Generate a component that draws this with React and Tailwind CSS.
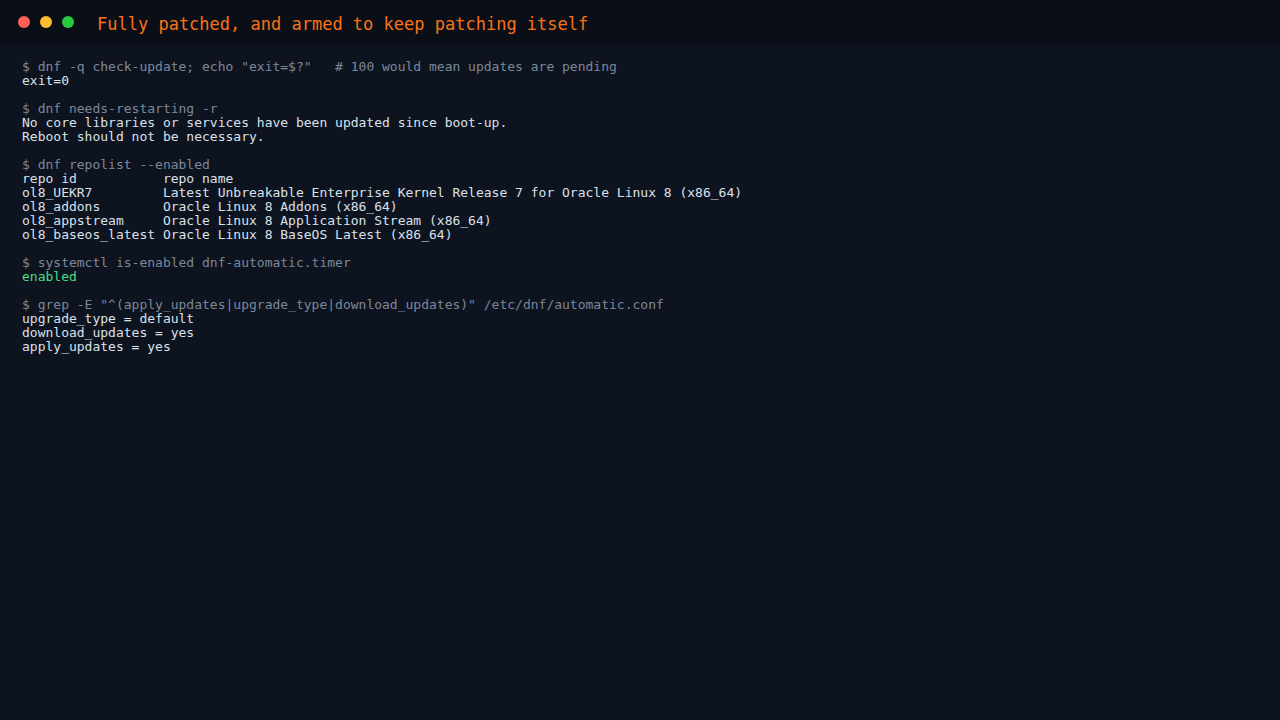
import React from 'react';

const Prompt = ({ children }) => <div className="text-[#7d8799]">$ {children}</div>;
const Out = ({ children, className = 'text-[#dbe1ea]' }) => <div className={className}>{children}</div>;
const Gap = () => <div className="h-[14px]" />;

const App = () => {
  return (
    <div className="min-h-[720px] w-full bg-[#0d1420] font-['DejaVu_Sans_Mono',monospace]">
      <div className="flex h-[44px] items-center bg-[#0a0e17] pl-[18px]">
        <div className="flex gap-[10px]">
          <span className="h-[12px] w-[12px] rounded-full bg-[#ff5f57]" />
          <span className="h-[12px] w-[12px] rounded-full bg-[#febc2e]" />
          <span className="h-[12px] w-[12px] rounded-full bg-[#28c840]" />
        </div>
        <div className="ml-[23px] mt-[6px] text-[17px] text-[#f97316]">Fully patched, and armed to keep patching itself</div>
      </div>
      <div className="whitespace-pre px-[22px] pt-[16px] text-[13px] leading-[14px]">
        <Prompt>dnf -q check-update; echo "exit=$?"   # 100 would mean updates are pending</Prompt>
        <Out>exit=0</Out>
        <Gap />
        <Prompt>dnf needs-restarting -r</Prompt>
        <Out>No core libraries or services have been updated since boot-up.</Out>
        <Out>Reboot should not be necessary.</Out>
        <Gap />
        <Prompt>dnf repolist --enabled</Prompt>
        <Out>repo id           repo name</Out>
        <Out>ol8_UEKR7         Latest Unbreakable Enterprise Kernel Release 7 for Oracle Linux 8 (x86_64)</Out>
        <Out>ol8_addons        Oracle Linux 8 Addons (x86_64)</Out>
        <Out>ol8_appstream     Oracle Linux 8 Application Stream (x86_64)</Out>
        <Out>ol8_baseos_latest Oracle Linux 8 BaseOS Latest (x86_64)</Out>
        <Gap />
        <Prompt>systemctl is-enabled dnf-automatic.timer</Prompt>
        <Out className="text-[#4ade80]">enabled</Out>
        <Gap />
        <Prompt>grep -E "^(apply_updates|upgrade_type|download_updates)" /etc/dnf/automatic.conf</Prompt>
        <Out>upgrade_type = default</Out>
        <Out>download_updates = yes</Out>
        <Out>apply_updates = yes</Out>
      </div>
    </div>
  );
};

export default App;
